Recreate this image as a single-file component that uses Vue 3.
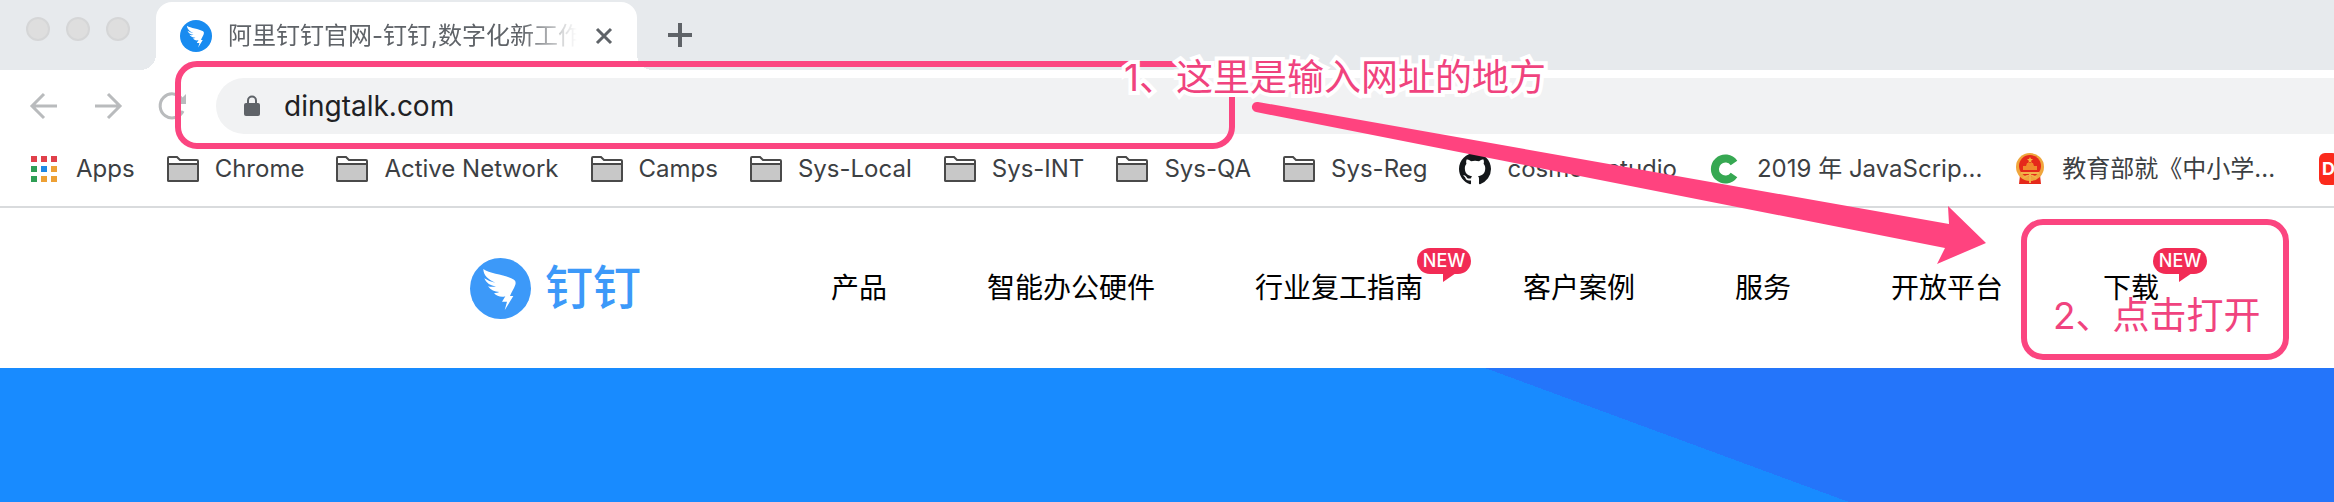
<template>
  <div class="screen">
    <header class="browser">
      <div class="tab-strip">
        <div class="window-buttons">
          <button v-for="name in windowButtons" :key="name" type="button" :aria-label="name"></button>
        </div>
        <div class="tab">
          <svg class="tab-favicon" viewBox="0 0 183 183">
            <circle cx="91.5" cy="91.5" r="91.5" />
            <path :d="wingPath" />
          </svg>
          <span class="tab-title">阿里钉钉官网-钉钉,数字化新工作</span>
          <button class="tab-close" type="button" aria-label="关闭标签页">
            <svg viewBox="0 0 18 18"><path d="M2 2 L16 16 M16 2 L2 16" /></svg>
          </button>
        </div>
        <button class="tab-add" type="button" aria-label="新标签页">
          <svg viewBox="0 0 24 24"><path d="M12 0 V24 M0 12 H24" /></svg>
        </button>
      </div>

      <div class="toolbar">
        <div class="tools">
          <button type="button" aria-label="后退">
            <svg viewBox="0 0 32 32"><path d="M29 16 H4 M16 4 L4 16 L16 28" /></svg>
          </button>
          <button type="button" aria-label="前进">
            <svg viewBox="0 0 32 32"><path d="M3 16 H28 M16 4 L28 16 L16 28" /></svg>
          </button>
          <button type="button" aria-label="刷新">
            <svg viewBox="0 0 32 32">
              <path d="M26 9 A12 12 0 1 0 27 21" />
              <path class="tool-solid" d="M30 4 V14 H20 Z" />
            </svg>
          </button>
        </div>
        <label class="address">
          <svg class="lock" viewBox="0 0 18 22">
            <path class="lock-shackle" d="M5 9 V5.500 A4 4 0 0 1 13 5.500 V9" />
            <rect x="1" y="8" width="16" height="13" rx="2" />
          </svg>
          <input v-model="url" type="text" aria-label="网址" />
        </label>
      </div>

      <nav class="bookmarks">
        <a v-for="item in bookmarks" :key="item.label" class="bookmark" href="#">
          <svg v-if="item.icon === 'apps'" class="bookmark-icon" viewBox="0 0 32 32">
            <rect
              v-for="(color, i) in appColors"
              :key="i"
              :x="3 + (i % 3) * 10"
              :y="3 + Math.floor(i / 3) * 10"
              width="6"
              height="6"
              :fill="color"
            />
          </svg>
          <svg v-else-if="item.icon === 'folder'" class="bookmark-icon folder" viewBox="0 0 32 32">
            <path class="folder-back" d="M1 27 V5 Q1 4 2 4 H10 L13 7 H30 Q31 7 31 8 V27 Q31 28 30 28 H2 Q1 28 1 27 Z" />
            <path class="folder-front" d="M1 11 H31 V27 Q31 28 30 28 H2 Q1 28 1 27 Z" />
          </svg>
          <svg v-else-if="item.icon === 'github'" class="bookmark-icon" viewBox="0 0 16 16">
            <path :d="githubPath" fill="#14171a" />
          </svg>
          <svg v-else-if="item.icon === 'c'" class="bookmark-icon" viewBox="0 0 32 32">
            <path class="c-mark" d="M25 10 A10.500 10.500 0 1 0 25 22" />
          </svg>
          <svg v-else class="bookmark-icon" viewBox="0 0 32 32">
            <path d="M6 22 H26 L27 31 H5 Z" fill="#e5291b" />
            <circle cx="16" cy="14" r="14" fill="#f0a63c" />
            <circle cx="16" cy="13" r="11" fill="#e5291b" />
            <path d="M9 17 V13 H12 L13 10 H19 L20 13 H23 V17 Z" fill="#f08a2c" />
            <path d="M16 4 L17 6 H19 L17 8 L18 10 L16 9 L14 10 L15 8 L13 6 H15 Z" fill="#f5b63e" />
            <path d="M7 20 H25 M9 25 Q16 20 23 25 M16 21 V30" fill="none" stroke="#f2b24a" stroke-width="2" />
          </svg>
          <span>{{ item.label }}</span>
        </a>
        <a class="bookmark" href="#"><span class="red-mark">D</span></a>
      </nav>
    </header>

    <div class="site-header">
      <a class="logo" href="#">
        <svg class="logo-mark" viewBox="0 0 183 183">
          <circle cx="91.5" cy="91.5" r="91.5" />
          <path :d="wingPath" />
        </svg>
        <span class="logo-text">钉钉</span>
      </a>
      <nav class="menu">
        <a v-for="item in menu" :key="item.label" class="menu-item" href="#">
          {{ item.label }}
          <span v-if="item.isNew" class="badge">NEW</span>
        </a>
      </nav>
    </div>

    <main class="hero"></main>

    <!-- 标注层 -->
    <div class="notes">
      <div class="frame frame-address"></div>
      <div class="frame frame-download"></div>
      <svg class="arrow" viewBox="0 0 740 170">
        <path d="M8 2 L699 124 L698 106 L736 143 L687 164 L695 148 L6 12 A5 5 0 0 1 8 2 Z" />
      </svg>
      <p class="note note-address">1、这里是输入网址的地方</p>
      <p class="note note-download">2、点击打开</p>
    </div>
  </div>
</template>

<script setup>
import { ref } from 'vue';

const url = ref('dingtalk.com');

const windowButtons = ['关闭', '最小化', '全屏'];

const appColors = [
  '#e0404a', '#e0404a', '#e0404a',
  '#2f9e55', '#1e88e5', '#eda035',
  '#2f9e55', '#eda035', '#eda035'
];

const bookmarks = [
  { label: 'Apps', icon: 'apps' },
  { label: 'Chrome', icon: 'folder' },
  { label: 'Active Network', icon: 'folder' },
  { label: 'Camps', icon: 'folder' },
  { label: 'Sys-Local', icon: 'folder' },
  { label: 'Sys-INT', icon: 'folder' },
  { label: 'Sys-QA', icon: 'folder' },
  { label: 'Sys-Reg', icon: 'folder' },
  { label: 'cosmos-studio', icon: 'github' },
  { label: '2019 年 JavaScrip...', icon: 'c' },
  { label: '教育部就《中小学...', icon: 'emblem' }
];

const menu = [
  { label: '产品' },
  { label: '智能办公硬件' },
  { label: '行业复工指南', isNew: true },
  { label: '客户案例' },
  { label: '服务' },
  { label: '开放平台' },
  { label: '下载', isNew: true }
];

const wingPath =
  'M40 33 C60 48 108 50 132 65 Q139 70 136 80 C132 93 124 102 120 114 L130 114 L104 157 L111 131 L96 131 L106 115 C94 119 80 115 72 105 Q80 106 88 102 C74 102 62 96 54 85 Q66 88 78 85 C62 84 49 75 43 61 Q58 72 76 74 C56 66 40 52 40 33 Z';

const githubPath =
  'M8 0C3.58 0 0 3.58 0 8c0 3.54 2.29 6.53 5.47 7.59.4.07.55-.17.55-.38 0-.19-.01-.82-.01-1.49-2.01.37-2.53-.49-2.69-.94-.09-.23-.48-.94-.82-1.13-.28-.15-.68-.52-.01-.53.63-.01 1.08.58 1.23.82.72 1.21 1.87.87 2.33.66.07-.52.28-.87.51-1.07-1.78-.2-3.64-.89-3.64-3.95 0-.87.31-1.59.82-2.15-.08-.2-.36-1.02.08-2.12 0 0 .67-.21 2.2.82.64-.18 1.32-.27 2-.27s1.36.09 2 .27c1.53-1.04 2.2-.82 2.2-.82.44 1.1.16 1.92.08 2.12.51.56.82 1.27.82 2.15 0 3.07-1.87 3.75-3.65 3.95.29.25.54.73.54 1.48 0 1.07-.01 1.93-.01 2.2 0 .21.15.46.55.38A8.01 8.01 0 0016 8c0-4.42-3.58-8-8-8z';
</script>

<style>
body {
  margin: 0;
}
</style>

<style scoped>
.screen {
  position: relative;
  display: flex;
  flex-direction: column;
  min-height: 100vh;
  overflow: hidden;
  background: #fff;
  font-family: Inter, "Noto Sans CJK SC", sans-serif;
}

button {
  padding: 0;
  border: 0;
  background: none;
}

a {
  color: inherit;
  text-decoration: none;
}

svg {
  display: block;
  flex-shrink: 0;
}

/* ===== 标签栏 ===== */
.tab-strip {
  display: flex;
  height: 70px;
  background: #e7eaed;
}

.window-buttons {
  display: flex;
  gap: 16px;
  padding: 17px 26px 0;
}

.window-buttons button {
  box-sizing: border-box;
  width: 24px;
  height: 24px;
  border: 2px solid #d5d6d7;
  border-radius: 50%;
  background: #dedede;
}

.tab {
  position: relative;
  display: flex;
  align-items: center;
  box-sizing: border-box;
  width: 481px;
  margin-top: 2px;
  padding: 0 24px;
  border-radius: 16px 16px 0 0;
  background: #fff;
}

.tab::before,
.tab::after {
  content: "";
  position: absolute;
  bottom: 0;
  width: 16px;
  height: 16px;
}

.tab::before {
  right: 100%;
  background: radial-gradient(circle at 0 0, transparent 16px, #fff 16px);
}

.tab::after {
  left: 100%;
  background: radial-gradient(circle at 100% 0, transparent 16px, #fff 16px);
}

.tab-favicon {
  width: 32px;
  height: 32px;
  margin-right: 16px;
  fill: #188bf0;
}

.tab-favicon path,
.logo-mark path {
  fill: #fff;
}

.tab-title {
  flex: 1;
  overflow: hidden;
  color: #5f6368;
  font-size: 24px;
  line-height: 36px;
  white-space: nowrap;
  mask-image: linear-gradient(to right, #000 84%, transparent);
}

.tab-close {
  margin-left: 18px;
}

.tab-close svg {
  width: 18px;
  height: 18px;
  stroke: #5f6368;
  stroke-width: 3;
}

.tab-add {
  margin-left: 31px;
}

.tab-add svg {
  width: 24px;
  height: 24px;
  stroke: #5f6368;
  stroke-width: 4;
}

/* ===== 工具栏 ===== */
.toolbar {
  display: flex;
  align-items: center;
  gap: 28px;
  padding: 8px 0 8px 28px;
}

.tools {
  display: flex;
  gap: 32px;
}

.tools svg {
  width: 32px;
  height: 32px;
  fill: none;
  stroke: #b9bbbd;
  stroke-width: 3;
}

.tools .tool-solid {
  fill: #b9bbbd;
  stroke: none;
}

.address {
  display: flex;
  flex: 1;
  align-items: center;
  gap: 23px;
  height: 56px;
  padding-left: 27px;
  border-radius: 28px 0 0 28px;
  background: #f1f2f3;
}

.lock {
  width: 18px;
  height: 22px;
  fill: #5f6368;
}

.lock-shackle {
  fill: none;
  stroke: #5f6368;
  stroke-width: 2;
}

.address input {
  flex: 1;
  padding: 0;
  border: 0;
  outline: 0;
  background: none;
  color: #202124;
  font: 28px/40px Inter, "Noto Sans CJK SC", sans-serif;
}

/* ===== 书签栏 ===== */
.bookmarks {
  display: flex;
  gap: 32px;
  padding: 0 0 10px 28px;
  overflow: hidden;
  border-bottom: 2px solid #d9dbdd;
  color: #3c4043;
  font-size: 24px;
  line-height: 54px;
  white-space: nowrap;
}

.bookmark {
  display: flex;
  flex-shrink: 0;
  align-items: center;
  gap: 16px;
}

.bookmark-icon {
  width: 32px;
  height: 32px;
}

.folder path {
  stroke: #4a4a4a;
  stroke-width: 2;
}

.folder-back {
  fill: #fff;
}

.folder-front {
  fill: #c8c8c8;
}

.c-mark {
  fill: none;
  stroke: #36a852;
  stroke-width: 8;
}

.red-mark {
  margin-left: 12px;
  padding: 0 3px;
  border-radius: 6px;
  background: #fb2a1c;
  color: #fff;
  font-size: 18px;
  font-weight: 700;
  line-height: 32px;
}

/* ===== 网站导航 ===== */
.site-header {
  display: flex;
  align-items: center;
  gap: 190px;
  box-sizing: border-box;
  height: 160px;
  padding-left: 470px;
}

.logo {
  display: flex;
  align-items: center;
  gap: 14px;
  color: #3c99f9;
}

.logo-mark {
  width: 61px;
  height: 61px;
  fill: #3c99f9;
}

.logo-text {
  font-size: 48px;
  font-weight: 500;
  line-height: 64px;
}

.menu {
  display: flex;
  gap: 100px;
  color: #000;
  font-size: 28px;
  line-height: 40px;
  white-space: nowrap;
}

.menu-item {
  position: relative;
}

.badge {
  position: absolute;
  top: -20px;
  left: calc(100% - 6px);
  width: 54px;
  border-radius: 13px;
  background: #f22b55;
  color: #fff;
  font-size: 18px;
  font-weight: 500;
  line-height: 26px;
  text-align: center;
}

.badge::after {
  content: "";
  position: absolute;
  top: 25px;
  left: 26px;
  border-top: 9px solid #f22b55;
  border-right: 13px solid transparent;
}

.hero {
  flex: 1;
  min-height: 134px;
  background: linear-gradient(to top right, #188bff 50%, #2475fa 50%) 1485px 0 / 364px 100% no-repeat,
    linear-gradient(to right, #188bff 1848px, #2475fa 1848px);
}

/* ===== 标注 ===== */
.notes {
  position: absolute;
  inset: 0;
  pointer-events: none;
}

.frame {
  position: absolute;
  box-sizing: border-box;
  border: 6px solid #fb4580;
  border-radius: 22px;
}

.frame-address {
  top: 61px;
  left: 175px;
  width: 1060px;
  height: 88px;
}

.frame-download {
  top: 219px;
  left: 2021px;
  width: 268px;
  height: 141px;
}

.arrow {
  position: absolute;
  top: 100px;
  left: 1250px;
  width: 740px;
  height: 170px;
  fill: #ff437f;
}

.note {
  position: absolute;
  margin: 0;
  color: #f0437e;
  font-size: 37px;
  line-height: 48px;
  white-space: nowrap;
  -webkit-text-stroke: 8px #fff;
  paint-order: stroke fill;
}

.note-address {
  top: 54px;
  left: 1124px;
}

.note-download {
  top: 292px;
  left: 2053px;
  -webkit-text-stroke: 0;
}
</style>
